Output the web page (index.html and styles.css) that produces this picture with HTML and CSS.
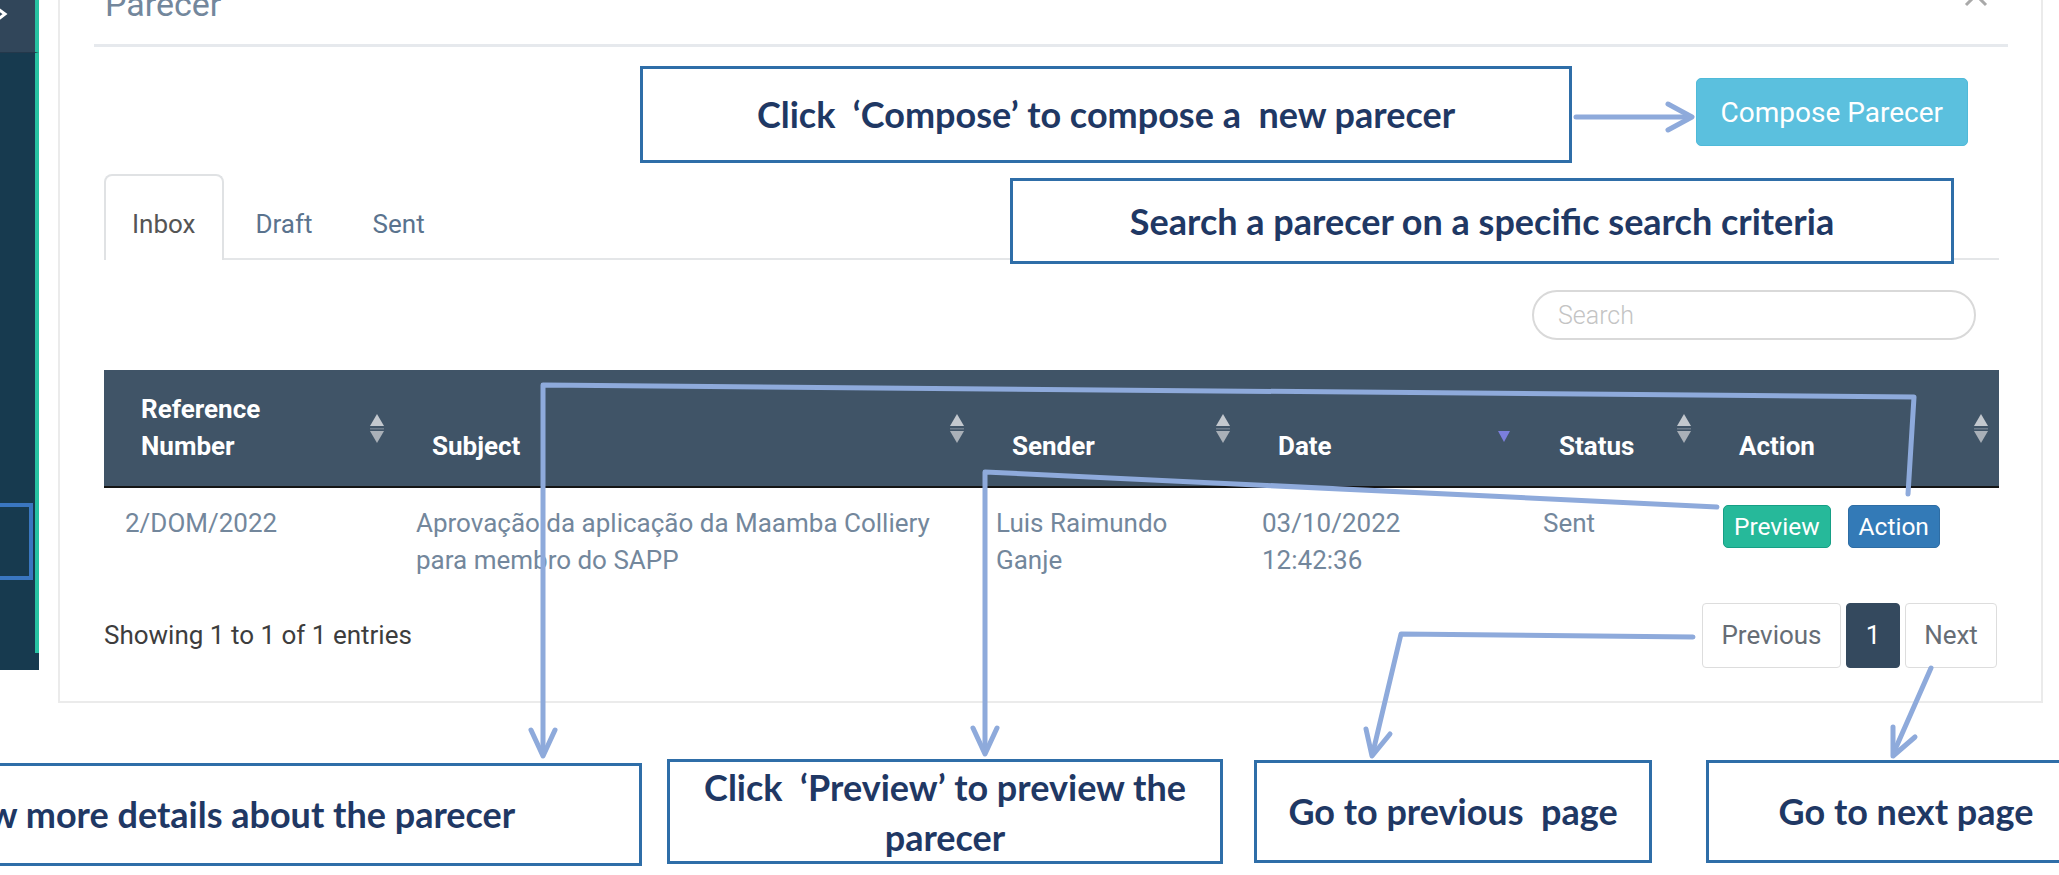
FILE: index.html
```html
<!DOCTYPE html>
<html lang="pt">
<head>
<meta charset="utf-8">
<title>Parecer</title>
<link rel="stylesheet" href="styles.css">
</head>
<body>
<div class="page">
  <aside class="sidebar">
    <div class="sidebar-top">
      <svg class="chevron" width="10" height="16" viewBox="0 0 10 16"><polyline points="-3,2 5,8 -3,14" fill="none" stroke="#ffffff" stroke-width="3"/></svg>
    </div>
    <div class="sidebar-main"></div>
  </aside>

  <section class="modal">
    <header class="modal-header">
      <h4 class="modal-title">Parecer</h4>
      <svg class="close" width="24" height="24" viewBox="0 0 24 24"><path d="M2 2 L22 22 M22 2 L2 22" stroke="#a9a9a9" stroke-width="3" fill="none"/></svg>
    </header>

    <div class="modal-body">
      <div class="compose-row">
        <button class="btn-compose">Compose Parecer</button>
      </div>

      <ul class="tabs">
        <li class="tab active">Inbox</li>
        <li class="tab">Draft</li>
        <li class="tab">Sent</li>
      </ul>

      <div class="search-row">
        <input class="search" type="text" placeholder="Search">
      </div>

      <table class="grid">
        <colgroup>
          <col class="c-ref"><col class="c-subject"><col class="c-sender"><col class="c-date"><col class="c-status"><col class="c-action">
        </colgroup>
        <thead>
          <tr>
            <th>Reference<br>Number<svg class="sort" width="14" height="30" viewBox="0 0 14 30"><path d="M7 0 L14 12 L0 12Z" fill="#c3c8ce"/><rect x="0" y="14" width="14" height="1.5" fill="#6d7b8a"/><path d="M0 17 L14 17 L7 29Z" fill="#a9b0b8"/></svg></th>
            <th>Subject<svg class="sort" width="14" height="30" viewBox="0 0 14 30"><path d="M7 0 L14 12 L0 12Z" fill="#c3c8ce"/><rect x="0" y="14" width="14" height="1.5" fill="#6d7b8a"/><path d="M0 17 L14 17 L7 29Z" fill="#a9b0b8"/></svg></th>
            <th>Sender<svg class="sort" width="14" height="30" viewBox="0 0 14 30"><path d="M7 0 L14 12 L0 12Z" fill="#c3c8ce"/><rect x="0" y="14" width="14" height="1.5" fill="#6d7b8a"/><path d="M0 17 L14 17 L7 29Z" fill="#a9b0b8"/></svg></th>
            <th>Date<svg class="sort" width="14" height="30" viewBox="0 0 14 30"><path d="M1 17 L13 17 L7 28Z" fill="#7b7fdc"/></svg></th>
            <th>Status<svg class="sort" width="14" height="30" viewBox="0 0 14 30"><path d="M7 0 L14 12 L0 12Z" fill="#c3c8ce"/><rect x="0" y="14" width="14" height="1.5" fill="#6d7b8a"/><path d="M0 17 L14 17 L7 29Z" fill="#a9b0b8"/></svg></th>
            <th>Action<svg class="sort" width="14" height="30" viewBox="0 0 14 30"><path d="M7 0 L14 12 L0 12Z" fill="#c3c8ce"/><rect x="0" y="14" width="14" height="1.5" fill="#6d7b8a"/><path d="M0 17 L14 17 L7 29Z" fill="#a9b0b8"/></svg></th>
          </tr>
        </thead>
        <tbody>
          <tr>
            <td>2/DOM/2022</td>
            <td>Aprovação da aplicação da Maamba Colliery para membro do SAPP</td>
            <td>Luis Raimundo Ganje</td>
            <td>03/10/2022 12:42:36</td>
            <td>Sent</td>
            <td><div class="actions"><button class="btn btn-preview">Preview</button><button class="btn btn-action">Action</button></div></td>
          </tr>
        </tbody>
      </table>

      <div class="table-foot">
        <div class="info">Showing 1 to 1 of 1 entries</div>
        <div class="pagination">
          <span class="page-btn pb-prev">Previous</span>
          <span class="page-btn pb-num current">1</span>
          <span class="page-btn pb-next">Next</span>
        </div>
      </div>
    </div>
  </section>
</div>

<div class="annotations">
  <svg class="arrows" width="2059" height="875" viewBox="0 0 2059 875">
    <g fill="none" stroke="#8eaadb" stroke-width="5" stroke-linecap="round" stroke-linejoin="round">
      <polyline points="1576,117 1689,117"/>
      <polyline points="1668,104 1692,117 1668,130"/>
      <polyline points="1908,494 1914,397 543,385 543,752"/>
      <polyline points="531,730 543,756 555,730"/>
      <polyline points="1717,507 985,472 985,750"/>
      <polyline points="973,728 985,754 997,728"/>
      <polyline points="1693,637 1401,634 1373,752"/>
      <polyline points="1366,729 1372,756 1390,734"/>
      <polyline points="1931,668 1894,752"/>
      <polyline points="1893,727 1893,756 1915,737"/>
    </g>
  </svg>
  <div class="callout co-compose">Click  ‘Compose’ to compose a  new parecer</div>
  <div class="callout co-search">Search a parecer on a specific search criteria</div>
  <div class="callout co-side"></div>
  <div class="callout co-details">View more details about the parecer</div>
  <div class="callout co-preview">Click  ‘Preview’ to preview the parecer</div>
  <div class="callout co-prev">Go to previous  page</div>
  <div class="callout co-next">Go to next page</div>
</div>
</body>
</html>
```
FILE: styles.css
```css
html, body {
  margin: 0;
  padding: 0;
  overflow: hidden;
  background: #ffffff;
}

body {
  position: relative;
  width: 2059px;
  height: 875px;
  font-family: Roboto, "Liberation Sans", Arial, sans-serif;
  font-size: 26px;
  line-height: 37px;
  color: #73879c;
}

.page {
  display: flex;
  align-items: flex-start;
}

/* sidebar */
.sidebar {
  flex: none;
  width: 39px;
  height: 670px;
  display: flex;
  flex-direction: column;
  background: #173a4f;
}

.sidebar-top {
  height: 53px;
  box-sizing: border-box;
  background: #31465a;
  border-right: 4px solid #27c2a2;
  border-bottom: 1px solid #24384b;
  padding-top: 6px;
}

.chevron {
  display: block;
}

.sidebar-main {
  height: 600px;
  border-right: 4px solid #27c2a2;
}

/* modal */
.modal {
  flex: none;
  margin-top: -16px;
  margin-left: 19px;
  width: 1985px;
  box-sizing: border-box;
  border: 2px solid #ebebeb;
  border-top: none;
  padding: 0 33px 33px 34px;
}

.modal-header {
  display: flex;
  justify-content: space-between;
  align-items: flex-start;
  padding: 0 20px 20px 11px;
  border-bottom: 3px solid #e6e9ed;
}

.modal-title {
  margin: 0;
  font-size: 34px;
  line-height: 40px;
  font-weight: 400;
  color: #73879c;
}

.close {
  display: block;
  margin-top: -1px;
}

.modal-body {
  padding: 0 9px 0 10px;
}

.compose-row {
  display: flex;
  justify-content: flex-end;
  margin-top: 31px;
  padding-right: 31px;
}

.btn-compose {
  height: 68px;
  padding: 0 24px;
  border: 1px solid #4fbad9;
  border-radius: 5px;
  background: #5bc0de;
  color: #ffffff;
  font-family: Roboto, "Liberation Sans", Arial, sans-serif;
  font-size: 28px;
}

/* tabs */
.tabs {
  display: flex;
  gap: 4px;
  margin: 28px 0 0;
  padding: 0;
  list-style: none;
  border-bottom: 2px solid #e4e6e8;
}

.tab {
  padding: 30px 26px 17px;
  border: 2px solid transparent;
  border-bottom: none;
  border-radius: 8px 8px 0 0;
  margin-bottom: -2px;
  color: #5a738e;
}

.tab.active {
  border-color: #e0e2e4;
  background: #ffffff;
  color: #555555;
}

/* search */
.search-row {
  display: flex;
  justify-content: flex-end;
  margin-top: 30px;
  padding-right: 23px;
}

.search {
  width: 444px;
  height: 50px;
  box-sizing: border-box;
  border: 2px solid #d9d9d9;
  border-radius: 25px;
  padding: 0 24px;
  font-family: Roboto, "Liberation Sans", Arial, sans-serif;
  font-size: 25px;
  font-weight: 300;
  outline: none;
}

.search::placeholder {
  color: #c4c4c4;
}

/* table */
.grid {
  width: 100%;
  margin-top: 30px;
  border-collapse: collapse;
  table-layout: fixed;
}

.c-ref { width: 291px; }
.c-subject { width: 580px; }
.c-sender { width: 266px; }
.c-date { width: 281px; }
.c-status { width: 180px; }
.c-action { width: 297px; }

.grid th {
  position: relative;
  padding: 21px 40px 21px 37px;
  vertical-align: bottom;
  text-align: left;
  font-weight: 700;
  color: #ffffff;
  background: rgba(52, 73, 94, 0.94);
  border-bottom: 2px solid #151515;
}

.sort {
  position: absolute;
  right: 11px;
  top: 50%;
  margin-top: -14px;
}

.grid td {
  padding: 17px 30px 17px 21px;
  vertical-align: top;
  color: #73879c;
}

.actions {
  display: flex;
  gap: 17px;
}

.btn {
  height: 43px;
  padding: 0 10px;
  border: 1px solid transparent;
  border-radius: 5px;
  color: #ffffff;
  font-family: Roboto, "Liberation Sans", Arial, sans-serif;
  font-size: 24.5px;
}

.btn-preview {
  background: #26b99a;
  border-color: #169f85;
}

.btn-action {
  background: #337ab7;
  border-color: #2e6da4;
}

/* footer of table */
.table-foot {
  display: flex;
  justify-content: space-between;
  align-items: center;
  margin-top: 7px;
}

.info {
  color: #3d3d3d;
}

.pagination {
  display: flex;
  gap: 5px;
  padding-right: 2px;
}

.page-btn {
  display: flex;
  align-items: center;
  justify-content: center;
  height: 65px;
  box-sizing: border-box;
  border: 1px solid #dddddd;
  border-radius: 4px;
  color: #666d75;
}

.pb-prev { width: 139px; }
.pb-num { width: 54px; }
.pb-next { width: 92px; }

.page-btn.current {
  background: #34495e;
  border-color: #34495e;
  color: #ffffff;
}

/* annotations overlay */
.annotations {
  position: absolute;
  left: 0;
  top: 0;
  width: 2059px;
  height: 875px;
  pointer-events: none;
}

.arrows {
  position: absolute;
  left: 0;
  top: 0;
}

.callout {
  position: absolute;
  box-sizing: border-box;
  display: flex;
  align-items: center;
  justify-content: center;
  text-align: center;
  white-space: pre-wrap;
  border: 3px solid #2f6ea8;
  background: #ffffff;
  color: #1f3864;
  font-family: Lato, "Open Sans", sans-serif;
  font-weight: 700;
  font-size: 36px;
  line-height: 43px;
}

.co-compose { left: 640px; top: 66px; width: 932px; height: 97px; }
.co-search { left: 1010px; top: 178px; width: 944px; height: 86px; }
.co-side { left: -300px; top: 503px; width: 333px; height: 77px; background: transparent; border: 4px solid #3a76c0; }
.co-details { left: -191px; top: 763px; width: 833px; height: 103px; }
.co-preview { left: 667px; top: 759px; width: 556px; height: 105px; padding: 0 20px; line-height: 50px; }
.co-prev { left: 1254px; top: 760px; width: 398px; height: 103px; }
.co-next { left: 1706px; top: 760px; width: 400px; height: 103px; }
```
